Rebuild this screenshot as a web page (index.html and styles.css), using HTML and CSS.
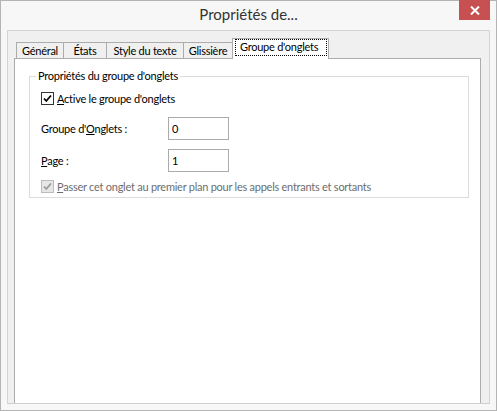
FILE: index.html
```html
<html>
<head>
    <meta charset="UTF-8">
    <title>Propriétés de...</title>
    <link rel="stylesheet" href="styles.css">
</head>
<body>
    <div class="fenetre">
        <div class="barreTitre">
            <span></span>
            <h1 class="titre">Propriétés de...</h1>
            <button class="fermer" type="button">
                <svg width="10" height="9" viewBox="0 0 10 9">
                    <path d="M1 0.5 L9 8.5 M9 0.5 L1 8.5" stroke="#fff" stroke-width="2"/>
                </svg>
            </button>
        </div>

        <div class="panneau">
            <div class="onglets">
                <div class="onglet ongletGeneral">Général</div>
                <div class="onglet ongletEtats">États</div>
                <div class="onglet ongletStyle">Style du texte</div>
                <div class="onglet ongletGlissiere">Glissière</div>
                <div class="onglet ongletGroupe actif"><span class="focus">Groupe d'onglets</span></div>
            </div>

            <div class="page">
                <fieldset class="groupe">
                    <legend>Propriétés du groupe d'onglets</legend>

                    <div class="contenuGroupe">
                        <label class="ligneCase premiereCase">
                            <span class="caseACocher"><svg width="11" height="11" viewBox="0 0 11 11"><path d="M2 5.5 L4.3 8 L9 2.5" fill="none" stroke="#000" stroke-width="1.8"/></svg></span>
                            <span><u>A</u>ctive le groupe d'onglets</span>
                        </label>

                        <div class="ligneChamp premierChamp">
                            <label for="groupeOnglets">Groupe d'<u>O</u>nglets :</label>
                            <input type="text" id="groupeOnglets" value="0">
                        </div>

                        <div class="ligneChamp">
                            <label for="page"><u>P</u>age :</label>
                            <input type="text" id="page" value="1">
                        </div>

                        <label class="ligneCase desactive">
                            <span class="caseACocher"><svg width="11" height="11" viewBox="0 0 11 11"><path d="M2 5.5 L4.3 8 L9 2.5" fill="none" stroke="#9a9a9a" stroke-width="1.8"/></svg></span>
                            <span><u>P</u>asser cet onglet au premier plan pour les appels entrants et sortants</span>
                        </label>
                    </div>
                </fieldset>
            </div>
        </div>
    </div>
</body>
</html>
```

FILE: styles.css
```css
body {
    margin: 0;
    font-family: "Lato", "Liberation Sans", sans-serif;
    font-size: 11px;
    letter-spacing: -0.25px;
    color: #000;
}

.fenetre {
    box-sizing: border-box;
    width: 497px;
    height: 411px;
    border: 1px solid #b4b4b4;
    background-color: #f7f7f7;
}

.barreTitre {
    display: grid;
    grid-template-columns: 1fr auto 1fr;
    height: 29px;
}

.titre {
    margin: 0;
    font-size: 15px;
    font-weight: normal;
    letter-spacing: 0;
    line-height: 27px;
    color: #333;
}

.fermer {
    justify-self: end;
    align-self: start;
    width: 31px;
    height: 20px;
    margin-right: 6px;
    margin-top: -1px;
    padding: 0;
    border: none;
    background-color: #c75050;
    display: flex;
    align-items: center;
    justify-content: center;
}

.panneau {
    box-sizing: border-box;
    height: 374px;
    margin: 0 6px;
    padding: 7px 8px 0 6px;
    border: 1px solid #d4d4d4;
    border-bottom-color: #cfcfcf;
    background-color: #f0f0f0;
    display: flex;
    flex-direction: column;
}

/* barre d'onglets */
.onglets {
    display: flex;
    align-items: flex-end;
    height: 20px;
    padding-left: 2px;
}

.onglet {
    box-sizing: border-box;
    height: 16px;
    margin-left: -1px;
    border: 1px solid #acacac;
    border-bottom: none;
    background-color: #f0f0f0;
    text-align: center;
    line-height: 15px;
    white-space: nowrap;
}

.ongletGeneral { width: 48px; margin-left: 0; }
.ongletEtats { width: 44px; }
.ongletStyle { width: 78px; }
.ongletGlissiere { width: 50px; }
.ongletGroupe { width: 97px; }

.actif {
    position: relative;
    z-index: 1;
    height: 21px;
    margin-bottom: -1px;
    padding: 1px 2px 0 3px;
    background-color: #fff;
    text-align: left;
}

.focus {
    display: block;
    height: 15px;
    outline: 1px dotted #000;
    padding-left: 4px;
    line-height: 14px;
}

.page {
    flex: 1;
    border: 1px solid #acacac;
    border-bottom: none;
    background-color: #fff;
}

/* cadre du groupe */
.groupe {
    margin: 9px 11px 0 14px;
    padding: 0 0 3px 0;
    border: 1px solid #dcdcdc;
}

.groupe legend {
    margin-left: 6px;
    padding: 0 2px;
    line-height: 16px;
}

.contenuGroupe {
    display: flex;
    flex-direction: column;
    padding-left: 11px;
}

.ligneCase {
    display: flex;
    align-items: center;
    height: 16px;
}

.premiereCase { margin-top: 6px; }

.caseACocher {
    box-sizing: border-box;
    width: 13px;
    height: 13px;
    margin-right: 3px;
    border: 1px solid #333;
    background-color: #fff;
    display: flex;
    align-items: center;
    justify-content: center;
}

.desactive {
    margin-top: 6px;
    color: #6d6d6d;
}

.desactive .caseACocher {
    border-color: #bcbcbc;
    background-color: #e6e6e6;
}

.ligneChamp {
    display: flex;
    align-items: center;
    height: 23px;
    margin-top: 9px;
}

.premierChamp { margin-top: 11px; }

.ligneChamp label {
    width: 127px;
}

.ligneChamp input {
    box-sizing: border-box;
    width: 61px;
    height: 23px;
    margin: 0;
    padding: 0 3px;
    border: 1px solid #ababab;
    font-family: inherit;
    font-size: 11px;
    color: #000;
}
```
